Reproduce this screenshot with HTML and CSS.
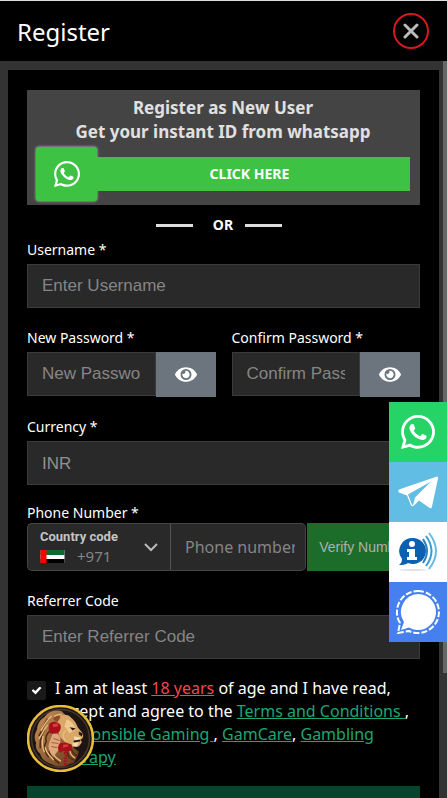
FILE: index.html
```
<!DOCTYPE html>
<html lang="en">
<head>
  <meta charset="UTF-8">
  <meta name="viewport" content="width=device-width, initial-scale=1">
  <title>Register</title>
  <link rel="stylesheet" href="styles.css">
</head>
<body>
  <svg class="sprite" aria-hidden="true">
    <symbol id="icon-whatsapp" viewBox="0 32 448 448">
      <path d="M380.9 97.1C339 55.1 283.2 32 223.9 32c-122.4 0-222 99.6-222 222 0 39.1 10.2 77.3 29.6 111L0 480l117.7-30.9c32.4 17.7 68.9 27 106.1 27h.1c122.3 0 224.1-99.6 224.1-222 0-59.3-25.2-115-67.1-157zm-157 341.6c-33.2 0-65.7-8.9-94-25.7l-6.7-4-69.8 18.3L72 359.2l-4.4-7c-18.5-29.4-28.2-63.3-28.2-98.2 0-101.7 82.8-184.5 184.6-184.5 49.3 0 95.6 19.2 130.4 54.1 34.8 34.9 56.2 81.2 56.1 130.5 0 101.8-84.9 184.6-186.6 184.6zm101.2-138.2c-5.5-2.8-32.8-16.2-37.9-18-5.1-1.9-8.8-2.8-12.5 2.8-3.7 5.6-14.3 18-17.6 21.8-3.2 3.7-6.5 4.2-12 1.4-32.6-16.3-54-29.1-75.5-66-5.7-9.8 5.7-9.1 16.3-30.3 1.8-3.7.9-6.9-.5-9.7-1.4-2.8-12.5-30.1-17.1-41.2-4.5-10.8-9.1-9.3-12.5-9.5-3.2-.2-6.9-.2-10.6-.2-3.7 0-9.7 1.4-14.8 6.9-5.1 5.6-19.4 19-19.4 46.3 0 27.3 19.9 53.7 22.6 57.4 2.8 3.7 39.1 59.7 94.8 83.8 35.2 15.2 49 16.5 66.6 13.9 10.7-1.6 32.8-13.4 37.4-26.4 4.6-13 4.6-24.1 3.2-26.4-1.3-2.5-5-3.9-10.5-6.6z"/>
    </symbol>
    <symbol id="icon-eye" viewBox="0 64 576 384">
      <path d="M572.52 241.4C518.29 135.59 410.93 64 288 64S57.68 135.64 3.48 241.41a32.35 32.35 0 0 0 0 29.19C57.71 376.41 165.07 448 288 448s230.32-71.64 284.52-177.41a32.35 32.35 0 0 0 0-29.19zM288 400a144 144 0 1 1 144-144 143.93 143.93 0 0 1-144 144zm0-240a95.31 95.31 0 0 0-25.31 3.79 47.85 47.85 0 0 1-66.9 66.9A95.78 95.78 0 1 0 288 160z"/>
    </symbol>
  </svg>

  <div class="modal">
    <header class="modal-header">
      <h1>Register</h1>
      <button type="button" class="btn-close" aria-label="Close">
        <svg viewBox="0 0 16 16"><path d="M2 2l12 12M14 2L2 14"/></svg>
      </button>
    </header>

    <div class="modal-main">
      <div class="modal-body">
        <div class="panel">
          <section class="promo">
            <p>Register as New User<br>Get your instant ID from whatsapp</p>
            <a href="#" class="promo-link">
              <span class="promo-icon"><svg><use href="#icon-whatsapp"/></svg></span>
              <span class="promo-text">CLICK HERE</span>
            </a>
          </section>
          <div class="divider">OR</div>

          <form class="register-form" autocomplete="off">
            <div class="field">
              <label for="username">Username *</label>
              <input type="text" id="username" class="control" placeholder="Enter Username">
            </div>
            <div class="field-row">
              <div class="field">
                <label for="password">New Password *</label>
                <div class="password-group">
                  <input type="password" id="password" class="control" placeholder="New Password">
                  <button type="button" class="btn-eye" aria-label="Show password"><svg><use href="#icon-eye"/></svg></button>
                </div>
              </div>
              <div class="field">
                <label for="confirm">Confirm Password *</label>
                <div class="password-group">
                  <input type="password" id="confirm" class="control" placeholder="Confirm Password">
                  <button type="button" class="btn-eye" aria-label="Show password"><svg><use href="#icon-eye"/></svg></button>
                </div>
              </div>
            </div>
            <div class="field field-currency">
              <label for="currency">Currency *</label>
              <select id="currency" class="control">
                <option>INR</option>
              </select>
            </div>
            <div class="field field-phone">
              <label for="phone">Phone Number *</label>
              <div class="phone-group">
                <div class="country">
                  <div class="country-info">
                    <label for="country-code">Country code</label>
                    <div class="country-value">
                      <svg class="flag" viewBox="0 0 24 13" aria-hidden="true">
                        <path fill="#fff" d="M0 0h24v13H0z"/>
                        <path fill="#11692f" d="M0 0h24v5H0z"/>
                        <path fill="#000" d="M0 9h24v4H0z"/>
                        <path fill="#f00" d="M0 0h6v13H0z"/>
                      </svg>
                      <select id="country-code">
                        <option>+971</option>
                      </select>
                    </div>
                  </div>
                  <svg class="chevron" viewBox="0 0 14 9" aria-hidden="true"><path d="M1 1l6 6 6-6"/></svg>
                </div>
                <input type="tel" id="phone" class="phone-input" placeholder="Phone number">
                <button type="button" class="btn-verify">Verify Number</button>
              </div>
            </div>
            <div class="field field-referrer">
              <label for="referrer">Referrer Code</label>
              <input type="text" id="referrer" class="control" placeholder="Enter Referrer Code">
            </div>
            <div class="terms">
              <input type="checkbox" id="agree" checked>
              <label for="agree">I am at least <a href="#" class="age">18 years</a> of age and I have read, accept and agree to the <a href="#">Terms and Conditions&nbsp;</a>, <a href="#">Responsible Gaming&nbsp;</a>, <a href="#">GamCare</a>, <a href="#">Gambling Therapy</a></label>
            </div>
            <button type="submit" class="btn-submit" aria-label="Register"></button>
          </form>
        </div>
      </div>
      <div class="scroll-track"><div class="scroll-thumb"></div></div>
    </div>
  </div>

  <nav class="social">
    <a href="#" class="social-whatsapp" aria-label="WhatsApp"><svg><use href="#icon-whatsapp"/></svg></a>
    <a href="#" class="social-telegram" aria-label="Telegram">
      <svg viewBox="0 0 40 33">
        <path fill="#fff" d="M39 1c1 0 1 1 1 2l-6 28c0 2-2 2-3 1l-10-7-5 5c-1 1-2 1-3 0l-4-10-8-3c-1-1-1-2 0-3z"/>
        <path fill="#61bde4" d="M10 19L33 6 17 22l-2 8-1-1z"/>
      </svg>
    </a>
    <a href="#" class="social-info" aria-label="Information">
      <svg viewBox="0 0 40 40">
        <ellipse cx="15" cy="38" rx="14" ry="1" fill="#e3e3e3"/>
        <path fill="#0d5fb0" d="M14 6a13 13 0 1 1-4 25c-3 2-6 2-9 2 2-2 3-3 3-6A13 13 0 0 1 14 6z"/>
        <circle cx="14" cy="12" r="3" fill="#fff"/>
        <path fill="#fff" d="M9 17h8v8h2v3H9v-3h2v-5H9z"/>
        <g fill="none" stroke-width="2">
          <path stroke="#2c82bd" d="M25 7q8 12 0 24"/>
          <path stroke="#3d9cd1" d="M28 4q11 15 0 30"/>
          <path stroke="#68bce1" d="M31 1q14 18 0 36"/>
        </g>
      </svg>
    </a>
    <a href="#" class="social-signal" aria-label="Signal">
      <svg viewBox="0 0 44 44">
        <path fill="#fff" d="M22 4a18 18 0 1 1-9 33.600L5 40l3-8A18 18 0 0 1 22 4z"/>
        <path fill="none" stroke="#fff" stroke-width="2" stroke-dasharray="6 2" d="M22 1a21 21 0 1 1-9 40L2 43l2-10A21 21 0 0 1 22 1z"/>
      </svg>
    </a>
  </nav>

  <button type="button" class="support" aria-label="Call support">
    <svg viewBox="0 0 66 66">
      <defs>
        <linearGradient id="mane" x1="0" y1="0" x2="1" y2="1">
          <stop offset="0" stop-color="#c8935a"/>
          <stop offset="1" stop-color="#643619"/>
        </linearGradient>
      </defs>
      <circle cx="33" cy="33" r="32" fill="#1c1512" stroke="#e9bd3c" stroke-width="2.500"/>
      <circle cx="33" cy="33" r="28.500" fill="none" stroke="#48352c" stroke-width="1.500"/>
      <!-- mane -->
      <path fill="url(#mane)" d="M34 6c-8-2-14 2-17 6-5 3-7 8-7 12-3 5-3 10-1 13-1 5 1 9 4 11 1 5 6 9 11 10 6 4 13 3 18 0l4-1 3-5 2-6-5-4-2-10-2-18z"/>
      <!-- face in profile -->
      <path fill="#d9a769" d="M29 15c2-6 10-7 14-3 4 3 6 7 7 10l5 6c1 3 0 5-2 6l1 3-3 4c-4 1-8 0-11-2l-8-8z"/>
      <path fill="#efc88f" d="M39 14c5 2 8 6 9 10l-6 4-5-7z"/>
      <path fill="#f2dcb8" d="M46 31l7 1-1 2-5 1zM45 37l6 0-2 4-4-1z"/>
      <path fill="#2c1712" d="M51 26l4 2-1 3-3-2zM42 22l6 1-3 2zM46 35l7-1-1 2-6 1z"/>
      <path fill="#8f4a28" d="M26 14c0-4 5-5 7-2l-3 5z"/>
      <g fill="none" stroke-linecap="round">
        <path stroke="#4f2a17" stroke-width="1.500" d="M20 14c-4 6-4 10-8 16M17 25c-5 7-4 12-4 17M19 36c-4 6-1 10 2 15M22 45c0 6 5 8 9 12M40 47c0 5 3 6 6 7M22 26c-3 3-4 7-3 10M44 44c1 4 3 5 5 6"/>
        <path stroke="#e9bd7c" stroke-width="1.300" d="M24 11c-5 4-7 8-10 14M20 20c-4 5-5 8-8 13M16 31c-2 6-1 10 1 15M18 42c1 6 5 8 8 12M26 47c0 4 4 6 7 8M34 9c-3 0-5 1-7 2M38 25c-3 3-3 7 0 11M42 45c1 4 3 6 5 7"/>
      </g>
      <!-- hand and handset -->
      <path fill="#e0a67c" d="M25 29c4-3 7 0 8 5l-1 9-6 8c-4-4-6-9-4-14z"/>
      <path fill="none" stroke="#a3623e" d="M26 33l6 2M24 37l7 1M24 41l6 1"/>
      <path fill="#a80f18" d="M22 19c2-4 9-3 11 1 1 4-1 7-4 8h-6c-2-3-2-6-1-9zM32 38l6-1 6 2c1 4-1 7-3 7l-5-1-3 2c-3-2-3-6-1-9z"/>
      <path fill="#dd3a3d" d="M25 19l5-1 1 3-5 1zM36 39l5 0-1 2-5 1z"/>
      <path fill="none" stroke="#a3141c" stroke-width="3" stroke-dasharray="2 1" d="M37 46c4 4-1 7 1 13"/>
    </svg>
  </button>
</body>
</html>
```
FILE: styles.css
```
* {
  box-sizing: border-box;
}
body {
  margin: 0;
  background: #333;
  color: #fff;
  font-family: "Noto Sans", Arial, sans-serif;
  font-size: 16px;
}
button, input, select {
  margin: 0;
  border: none;
  border-radius: 0;
}
button {
  padding: 0;
  cursor: pointer;
}
.sprite {
  position: absolute;
  width: 0;
  height: 0;
}

/* Modal */
.modal {
  display: flex;
  flex-direction: column;
  height: 100vh;
}
.modal-header {
  display: flex;
  align-items: center;
  justify-content: space-between;
  flex: none;
  height: 61px;
  padding: 0 18px 0 17px;
  background: #000;
  border-top: 1px solid #dcdfde;
}
.modal-header h1 {
  margin: 0;
  font-size: 24px;
  font-weight: 400;
}
.btn-close {
  display: flex;
  align-items: center;
  justify-content: center;
  width: 36px;
  height: 36px;
  background: none;
  border: 2px solid #d5181b;
  border-radius: 50%;
}
.btn-close svg {
  width: 16px;
  height: 16px;
  fill: none;
  stroke: #bbb;
  stroke-width: 3;
  stroke-linecap: round;
}
.modal-main {
  display: flex;
  flex: 1;
  min-height: 0;
}
.modal-body {
  flex: 1;
  min-width: 0;
  overflow-y: auto;
  scrollbar-width: none;
  padding: 9px 4px 8px 8px;
}
.scroll-track {
  width: 4px;
  background: #333;
}
.scroll-thumb {
  height: 83%;
  background: #666;
}
.panel {
  padding: 20px 19px;
  background: #000;
}

/* Whatsapp box */
.promo {
  padding: 6px 10px 4px 9px;
  background: #444;
  text-align: center;
}
.promo p {
  margin: 0;
  color: #e0e0e0;
  font-size: 17px;
  font-weight: 700;
  line-height: 24px;
}
.promo-link {
  display: flex;
  align-items: center;
  margin-top: 3px;
  color: #fff;
  font-size: 14px;
  font-weight: 700;
  text-decoration: none;
}
.promo-icon {
  display: flex;
  align-items: center;
  justify-content: center;
  width: 61px;
  height: 54px;
  background: #3dc244;
  border-radius: 3px;
  box-shadow: 0 0 3px #ccc;
}
.promo-icon svg {
  width: 26px;
  height: 26px;
  fill: #fff;
}
.promo-text {
  flex: 1;
  padding-right: 8px;
  background: #3dc244;
  line-height: 34px;
}
.divider {
  display: flex;
  align-items: center;
  justify-content: center;
  margin: 8px 0 3px;
  padding-right: 9px;
  gap: 12px;
  font-size: 14px;
  font-weight: 700;
  line-height: 24px;
}
.divider::before,
.divider::after {
  content: "";
  width: 37px;
  height: 3px;
  background: #ddd;
}
.divider::before {
  margin-right: 8px;
}

/* Form */
.field {
  margin-bottom: 20px;
}
.field > label {
  display: block;
  margin-bottom: 4px;
  font-size: 14px;
  line-height: 20px;
}
.field-row {
  display: grid;
  grid-template-columns: 1fr 1fr;
  gap: 16px;
}
.field-currency {
  margin-bottom: 18px;
}
.field-phone > label {
  margin-bottom: 0;
}
.field-referrer {
  margin-bottom: 18px;
}
.control {
  display: block;
  width: 100%;
  height: 44px;
  padding: 0 14px;
  appearance: none;
  background: #292929;
  border: 1px solid #3b3b3b;
  color: #919191;
  font-family: "Liberation Sans", Arial, sans-serif;
  font-size: 17px;
  opacity: 1;
}
.control::placeholder,
.phone-input::placeholder {
  color: #858585;
  opacity: 1;
}
.password-group {
  display: flex;
  align-items: flex-start;
}
.password-group .control {
  flex: 1;
  min-width: 0;
}
.btn-eye {
  display: flex;
  align-items: center;
  justify-content: center;
  width: 60px;
  height: 45px;
  background: #6c757d;
}
.btn-eye svg {
  width: 22px;
  height: 15px;
  fill: #fff;
}
.phone-group {
  display: flex;
  height: 48px;
}
.country {
  display: flex;
  align-items: center;
  justify-content: space-between;
  flex: none;
  width: 144px;
  padding: 0 12px;
  background: #292929;
  border: 1px solid #444;
  border-right-color: #555;
  border-radius: 5px 0 0 5px;
}
.country-info label {
  display: block;
  color: #c4c4c4;
  font-family: Roboto, Arial, sans-serif;
  font-size: 13px;
  font-weight: 700;
  line-height: 18px;
}
.country-value {
  display: flex;
  align-items: center;
  gap: 12px;
}
.flag {
  width: 25px;
  height: 13px;
}
.country-value select {
  padding: 0;
  appearance: none;
  background: none;
  color: #858585;
  font-family: "Noto Sans", Arial, sans-serif;
  font-size: 15px;
  line-height: 20px;
}
.chevron {
  width: 14px;
  height: 9px;
  fill: none;
  stroke: #bbb;
  stroke-width: 2;
}
.phone-input {
  flex: 1;
  min-width: 0;
  padding: 0 10px 0 14px;
  background: #292929;
  border: 1px solid #444;
  border-left: none;
  border-radius: 0 5px 5px 0;
  color: #fff;
  font-family: "Noto Sans", Arial, sans-serif;
  font-size: 16px;
}
.btn-verify {
  flex: none;
  width: 113px;
  margin-left: 1px;
  background: #1c6d2a;
  color: #b0b0b0;
  font-family: "Liberation Sans", Arial, sans-serif;
  font-size: 14px;
}
.terms {
  display: flex;
  align-items: flex-start;
  gap: 9px;
  margin-bottom: 17px;
  font-size: 16px;
  line-height: 23px;
}
.terms input {
  display: grid;
  place-items: center;
  flex: none;
  width: 19px;
  height: 19px;
  margin-top: 4px;
  appearance: none;
  background: #1a1a1a;
  border-radius: 2px;
}
.terms input:checked::before {
  content: "";
  width: 10px;
  height: 8px;
  background: #fff;
  clip-path: polygon(0 50%, 18% 34%, 38% 56%, 82% 0, 100% 18%, 40% 100%);
}
.terms a {
  color: #1da672;
}
.terms .age {
  color: #ee4950;
}
.btn-submit {
  display: block;
  width: 100%;
  height: 44px;
  background: #06452d;
}

/* Floating contacts */
.social {
  position: fixed;
  top: 402px;
  right: 0;
  width: 58px;
}
.social a {
  display: flex;
  align-items: center;
  justify-content: center;
  height: 60px;
}
.social svg {
  width: 40px;
  height: 40px;
}
.social-whatsapp {
  background: #25d366;
}
.social .social-whatsapp svg {
  width: 34px;
  height: 34px;
  fill: #fff;
}
.social-telegram {
  background: #61bde4;
}
.social-info {
  background: #fff;
}
.social-signal {
  background: #4680ee;
}
.social .social-signal svg {
  width: 44px;
  height: 44px;
}
.support {
  position: fixed;
  left: 27px;
  bottom: 26px;
  width: 67px;
  height: 67px;
  background: none;
  border-radius: 50%;
}
.support svg {
  display: block;
  width: 100%;
  height: 100%;
}
```
